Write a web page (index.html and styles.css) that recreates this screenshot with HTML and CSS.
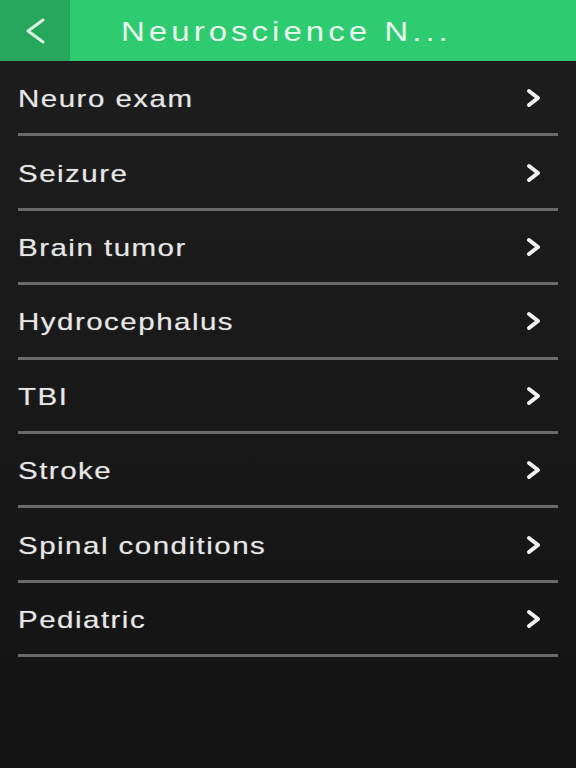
FILE: index.html
```html
<!DOCTYPE html>
<html>
<head>
<meta charset="utf-8">
<link rel="stylesheet" href="styles.css">
</head>
<body>
<div class="app">
  <header class="bar">
    <div class="back">
      <svg width="24" height="26" viewBox="0 0 24 26"><path d="M20 2 L5 13 L20 24" fill="none" stroke="#d9f3e2" stroke-width="3" stroke-linecap="round" stroke-linejoin="round"/></svg>
    </div>
    <div class="title"><span class="title-text">Neuroscience N...</span></div>
  </header>
  <ul class="list">
    <li class="row"><span class="label">Neuro exam</span><svg class="chev" width="16" height="20" viewBox="0 0 16 20"><path d="M3 3 L12 10 L3 17" fill="none" stroke="#f2f2f2" stroke-width="4" stroke-linecap="round" stroke-linejoin="round"/></svg></li>
    <li class="row"><span class="label">Seizure</span><svg class="chev" width="16" height="20" viewBox="0 0 16 20"><path d="M3 3 L12 10 L3 17" fill="none" stroke="#f2f2f2" stroke-width="4" stroke-linecap="round" stroke-linejoin="round"/></svg></li>
    <li class="row"><span class="label">Brain tumor</span><svg class="chev" width="16" height="20" viewBox="0 0 16 20"><path d="M3 3 L12 10 L3 17" fill="none" stroke="#f2f2f2" stroke-width="4" stroke-linecap="round" stroke-linejoin="round"/></svg></li>
    <li class="row"><span class="label">Hydrocephalus</span><svg class="chev" width="16" height="20" viewBox="0 0 16 20"><path d="M3 3 L12 10 L3 17" fill="none" stroke="#f2f2f2" stroke-width="4" stroke-linecap="round" stroke-linejoin="round"/></svg></li>
    <li class="row"><span class="label">TBI</span><svg class="chev" width="16" height="20" viewBox="0 0 16 20"><path d="M3 3 L12 10 L3 17" fill="none" stroke="#f2f2f2" stroke-width="4" stroke-linecap="round" stroke-linejoin="round"/></svg></li>
    <li class="row"><span class="label">Stroke</span><svg class="chev" width="16" height="20" viewBox="0 0 16 20"><path d="M3 3 L12 10 L3 17" fill="none" stroke="#f2f2f2" stroke-width="4" stroke-linecap="round" stroke-linejoin="round"/></svg></li>
    <li class="row"><span class="label">Spinal conditions</span><svg class="chev" width="16" height="20" viewBox="0 0 16 20"><path d="M3 3 L12 10 L3 17" fill="none" stroke="#f2f2f2" stroke-width="4" stroke-linecap="round" stroke-linejoin="round"/></svg></li>
    <li class="row"><span class="label">Pediatric</span><svg class="chev" width="16" height="20" viewBox="0 0 16 20"><path d="M3 3 L12 10 L3 17" fill="none" stroke="#f2f2f2" stroke-width="4" stroke-linecap="round" stroke-linejoin="round"/></svg></li>
  </ul>
</div>
</body>
</html>
```
FILE: styles.css
```css
html, body {
  margin: 0;
  padding: 0;
}
body {
  width: 576px;
  height: 768px;
  overflow: hidden;
  background: #121212;
  font-family: "Liberation Sans", Arial, sans-serif;
}
.app {
  height: 768px;
  background: linear-gradient(to bottom, #1d1d1d 0%, #1a1a1a 40%, #131313 100%);
}
.bar {
  display: flex;
  height: 61px;
  background: #2ecb71;
}
.back {
  width: 70px;
  background: #27a65d;
  display: flex;
  align-items: center;
  justify-content: flex-start;
  padding-left: 23px;
  box-sizing: border-box;
}
.title {
  padding-left: 51px;
  display: flex;
  align-items: center;
  color: #e6f8ec;
  font-size: 28px;
  padding-top: 2px;
}
.title-text {
  display: inline-block;
  letter-spacing: 3.4px;
  transform: scaleX(1.18);
  transform-origin: left center;
}
.list {
  list-style: none;
  margin: 0 18px;
  padding: 0;
}
.row {
  display: flex;
  align-items: center;
  justify-content: space-between;
  height: 71.4px;
  border-bottom: 3px solid #6a6a6a;
}
.row:first-child {
  height: 72.4px;
}
.label {
  display: inline-block;
  color: #e6e6e6;
  font-size: 24px;
  letter-spacing: 1.2px;
  transform: scaleX(1.23);
  transform-origin: left center;
  padding-left: 0;
  margin-top: 3px;
  text-shadow: 0 0 1px rgba(230,230,230,0.5);
}
.chev {
  margin-right: 16px;
  margin-top: 1px;
}
```
